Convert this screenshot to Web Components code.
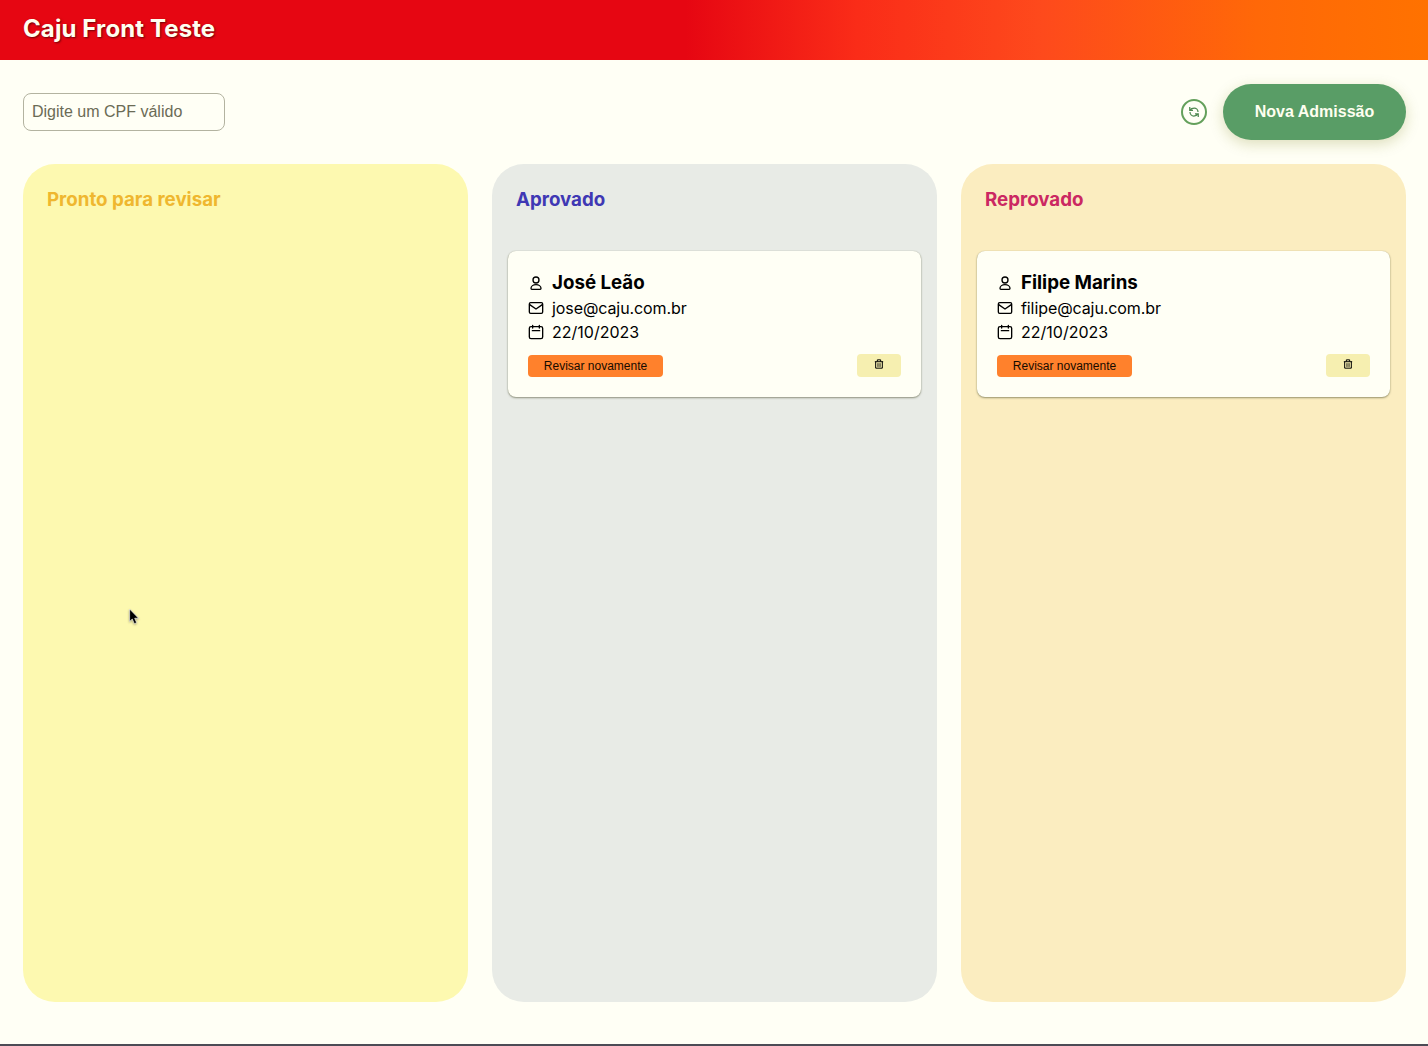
<!DOCTYPE html>
<html lang="pt-BR">
<head>
<meta charset="utf-8">
<title>Caju Front Teste</title>
<style>
html,body{margin:0;height:100%}
body{font-family:Inter,"Liberation Sans",sans-serif;font-size:16px;color:#000;background:#fffff5;overflow:hidden}
</style>
</head>
<body>
<caju-app></caju-app>
<script>
const define = (name, html) => customElements.define(name, class extends HTMLElement {
  constructor() {
    super();
    const t = document.createElement('template');
    t.innerHTML = typeof html === 'function' ? html(this) : html;
    this.attachShadow({mode: 'open'}).append(t.content.cloneNode(true));
  }
});

const icons = {
  user: '<g fill="none" stroke="currentColor" stroke-width="2"><circle cx="12" cy="7.500" r="4.500"/><path d="M12 14.500c-4.200 0-7.500 2.300-7.500 5.500 0 1 .5 1.500 1.300 1.500h12.400c.8 0 1.300-.5 1.300-1.500 0-3.200-3.300-5.500-7.500-5.500z"/></g>',
  mail: '<g fill="none" stroke="currentColor" stroke-width="2" stroke-linejoin="round"><rect x="2" y="4" width="20" height="16" rx="2"/><path d="M2.500 7l9.500 6.500L21.500 7"/></g>',
  calendar: '<g fill="none" stroke="currentColor" stroke-width="2" stroke-linecap="round"><rect x="2" y="4" width="20" height="18" rx="2.500"/><path d="M7 2v4M17 2v4M6.500 10h11"/></g>',
  trash: '<g fill="none" stroke="currentColor" stroke-width="2.400"><path d="M2 6.500h20M8 6V2h8v4M4 6.500V22h16V6.500"/><path stroke-width="2" d="M9 10v9M12 10v9M15 10v9" opacity=".75"/></g>',
  refresh: '<g fill="none" stroke="currentColor" stroke-width="2.500"><path d="M3.500 2v6.500H10M4 8.200C6 5 9 4 12.500 4c4 0 7.500 3.500 7.500 8M20.500 22v-6.500H14M20 15.800c-2 3.200-5 4.200-8.500 4.200C7.500 20 4 16.500 4 12"/></g>'
};
define('caju-icon', el => `<style>:host{display:block;width:16px;height:16px;flex:none}svg{display:block;width:100%;height:100%}</style><svg viewBox="0 0 24 24">${icons[el.getAttribute('name')]}</svg>`);

define('caju-header', `<style>
:host{display:flex;align-items:center;height:60px;padding:0 23px 3px;box-sizing:border-box;flex:none;color:#fffff0;
background:linear-gradient(90deg,#e60612 0%,#e60612 48%,#fa2c18 60%,#fe4a1c 73%,#ff6808 88%,#ff7200 100%)}
h1{margin:0;font-size:24px;line-height:30px;font-weight:700;letter-spacing:.11px;text-shadow:1px 1px 2px #0008}
</style><h1><slot></slot></h1>`);

define('caju-search', `<style>
:host{display:block}
input{display:block;box-sizing:border-box;width:202px;height:38px;padding:0 8px;border:1px solid #b3b3a0;border-radius:8px;background:#fffff5;font:16px "Liberation Sans",sans-serif;outline:0}
input::placeholder{color:#6b6b55;opacity:1}
</style><input placeholder="Digite um CPF válido">`);

define('caju-refresh', `<style>
:host{display:block}
button{display:flex;align-items:center;justify-content:center;box-sizing:border-box;width:26px;height:26px;padding:0;border:2px solid #64a05b;border-radius:50%;background:none;color:#4f8950}
caju-icon{width:12px;height:12px}
</style><button aria-label="refetch"><caju-icon name="refresh"></caju-icon></button>`);

define('caju-button', `<style>
:host{display:block}
button{display:block;width:183px;height:56px;padding:0;border:0;border-radius:36px;background:#599d66;color:#fffff0;font:700 16px "Liberation Sans",sans-serif;box-shadow:0 4px 14px rgba(120,125,20,.25)}
</style><button><slot></slot></button>`);

define('caju-column', `<style>
:host{display:block;flex:1 1 0;min-width:0;border-radius:32px;background:var(--bg)}
h3{margin:24px;font-size:18.72px;line-height:23px;font-weight:700;color:var(--fg)}
.list{padding:16px 16px 0}
</style><h3><slot name="title"></slot></h3><div class="list"><slot></slot></div>`);

define('caju-card', `<style>
:host{display:block;box-sizing:border-box;height:146px;padding:20px;border-radius:8px;background:#fffff5;box-shadow:0 1px 2px rgba(60,64,30,.5),0 0 1px rgba(60,64,30,.3)}
.row{display:flex;align-items:center;gap:8px;height:24px}
.row.name{height:23px;padding-bottom:2px}
h3{margin:0;font-size:18.72px;line-height:23px;font-weight:700}
p{margin:0;line-height:24px}
.email{letter-spacing:-.09px}
.actions{display:flex;justify-content:space-between;margin-top:9px}
.review{box-sizing:border-box;width:135px;height:22px;margin-top:2px;padding:0;border:0;border-radius:4px;background:#ff812c;color:#160b00;font:12px "Liberation Sans",sans-serif}
.del{display:flex;align-items:center;justify-content:center;width:44px;height:23px;margin-top:1px;border-radius:4px;background:#f6efb0}
.del caju-icon{width:10px;height:10px;margin-bottom:3px}
.name caju-icon{margin-top:1px}
</style>
<div class="row name"><caju-icon name="user"></caju-icon><h3><slot name="name"></slot></h3></div>
<div class="row"><caju-icon name="mail"></caju-icon><p class="email"><slot name="email"></slot></p></div>
<div class="row"><caju-icon name="calendar"></caju-icon><p><slot name="date"></slot></p></div>
<div class="actions"><button class="review">Revisar novamente</button><span class="del"><caju-icon name="trash"></caju-icon></span></div>`);

define('caju-cursor', `<style>:host{position:absolute;left:129px;top:609px;width:12px;height:18px}svg{display:block;filter:drop-shadow(0 1px 1px #0005)}</style>
<svg width="11" height="16" viewBox="0 0 12 18"><path d="M.5 0v14l3-2.700 2.300 5.200 2.600-1.100-2.200-5H10.500z" fill="#000" stroke="#fff" stroke-width=".7"/></svg>`);

define('caju-app', `<style>
:host{display:flex;flex-direction:column;height:1046px;box-sizing:border-box;border-bottom:2px solid #4c4b55}
.bar{display:flex;align-items:center;justify-content:space-between;height:56px;padding:24px 22px 24px 23px}
.actions{display:flex;align-items:center;gap:16px}
.board{display:flex;gap:24px;height:838px;padding:0 22px 0 23px}
</style>
<caju-header>Caju Front Teste</caju-header>
<div class="bar"><caju-search></caju-search><div class="actions"><caju-refresh></caju-refresh><caju-button>Nova Admissão</caju-button></div></div>
<div class="board">
<caju-column style="--bg:#fdf9b0;--fg:#efb72f"><span slot="title">Pronto para revisar</span></caju-column>
<caju-column style="--bg:#e8ebe6;--fg:#3f38b4"><span slot="title">Aprovado</span><caju-card><span slot="name">José Leão</span><span slot="email">jose@caju.com.br</span><span slot="date">22/10/2023</span></caju-card></caju-column>
<caju-column style="--bg:#fbedc0;--fg:#cb2862"><span slot="title">Reprovado</span><caju-card><span slot="name">Filipe Marins</span><span slot="email">filipe@caju.com.br</span><span slot="date">22/10/2023</span></caju-card></caju-column>
</div>
<caju-cursor></caju-cursor>`);
</script>
</body>
</html>
